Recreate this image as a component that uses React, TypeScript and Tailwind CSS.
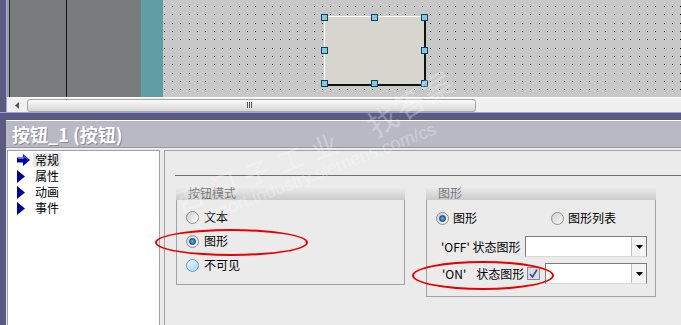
import React from "react";

type RadioState = "off" | "on" | "hover";

function Radio({ state }: { state: RadioState }) {
  if (state === "hover") {
    return (
      <span className="w-[13px] h-[13px] shrink-0 rounded-full border border-[#5f9fd2] bg-linear-to-br from-[#eef8ff] to-[#a3d5f6]" />
    );
  }
  return (
    <span className="w-[13px] h-[13px] shrink-0 rounded-full border border-[#8e8e8e] bg-linear-to-br from-[#cfcfcf] to-[#fbfbfb] flex items-center justify-center">
      {state === "on" && (
        <span className="w-[7px] h-[7px] rounded-full border border-[#0b3f78] bg-radial from-[#63b6f0] to-[#0d55a0]" />
      )}
    </span>
  );
}

function Combo({ width }: { width: string }) {
  return (
    <div
      className={`${width} h-[21px] bg-white border border-[#7c7c7c] border-b-[#d8d8d8] flex justify-end`}
    >
      <div className="w-[15px] h-full bg-[#f4f4f4] border-l border-[#c4c4c4] flex items-center justify-center">
        <svg width="7" height="4" viewBox="0 0 7 4">
          <path d="M0 0h7L3.5 4z" fill="#000" />
        </svg>
      </div>
    </div>
  );
}

function GroupBox({
  title,
  width,
  height,
  children,
}: {
  title: string;
  width: string;
  height: string;
  children: React.ReactNode;
}) {
  return (
    <div className={`${width} ${height} flex flex-col`}>
      <div className="h-[14px] bg-linear-to-b from-[#efefef] to-[#cbcbcb] pl-[12px] text-[12px] leading-[14px] text-[#7a7a7a]">
        {title}
      </div>
      <div className="flex-1 border border-t-0 border-[#a2a2a2]">{children}</div>
    </div>
  );
}

const Tri = () => (
  <svg width="8" height="13" viewBox="0 0 8 13">
    <path d="M0 0L8 6.5L0 13Z" fill="#000090" />
  </svg>
);

const Arrow = () => (
  <svg width="13" height="12" viewBox="0 0 13 12">
    <path d="M0 3.5h6V0l7 6-7 6V8.5H0z" fill="#0000a8" />
    <path d="M1 4.5h6V2l4 3.5" fill="none" stroke="#5a6cf0" strokeWidth="1" />
  </svg>
);

const navItems = [
  { label: "常规", active: true },
  { label: "属性", active: false },
  { label: "动画", active: false },
  { label: "事件", active: false },
];

function Handle({ cls }: { cls: string }) {
  return (
    <span
      className={`absolute w-[7px] h-[7px] bg-[#7ccaee] border border-[#1e3d4c] ${cls}`}
    />
  );
}

export default function App() {
  return (
    <div className="relative w-[681px] h-[325px] overflow-hidden bg-[#5b5b82] flex flex-col font-['Noto_Sans_CJK_SC',sans-serif] text-black">
      {/* editor area */}
      <div className="ml-[6px] border-l border-[#a8a8ec] flex flex-col">
        <div className="h-[97px] flex">
          <div className="w-[134px] flex bg-[#787c7c]">
            <div className="w-[2px] bg-[#9a9aa8]" />
            <div className="w-px bg-[#2c2c2c]" />
            <div className="w-[56px]" />
            <div className="w-px bg-[#111]" />
            <div className="flex-1" />
          </div>
          <div className="w-[22px] bg-[#5f9ea5]" />
          <div className="relative flex-1 bg-[#c8c8c8]">
            <svg className="absolute inset-0" width="100%" height="100%">
              <defs>
                <pattern
                  id="dots"
                  x="9"
                  y="6"
                  width="25"
                  height="25"
                  patternUnits="userSpaceOnUse"
                >
                  <rect x="0" y="0" width="1" height="1" fill="#000" />
                  <rect x="8" y="0" width="1" height="1" fill="#000" />
                  <rect x="17" y="0" width="1" height="1" fill="#000" />
                  <rect x="0" y="8" width="1" height="1" fill="#000" />
                  <rect x="8" y="8" width="1" height="1" fill="#000" />
                  <rect x="17" y="8" width="1" height="1" fill="#000" />
                  <rect x="0" y="17" width="1" height="1" fill="#000" />
                  <rect x="8" y="17" width="1" height="1" fill="#000" />
                  <rect x="17" y="17" width="1" height="1" fill="#000" />
                </pattern>
              </defs>
              <rect width="100%" height="100%" fill="url(#dots)" />
            </svg>
            <div className="absolute left-[161px] top-[16px] w-[102px] h-[70px] bg-[#d6d6ce] border-t border-l border-white border-r-2 border-b-2 border-r-[#111] border-b-[#111]" />
            <Handle cls="left-[158px] top-[14px]" />
            <Handle cls="left-[208px] top-[14px]" />
            <Handle cls="left-[258px] top-[14px]" />
            <Handle cls="left-[158px] top-[47px]" />
            <Handle cls="left-[258px] top-[47px]" />
            <Handle cls="left-[158px] top-[80px]" />
            <Handle cls="left-[208px] top-[80px]" />
            <Handle cls="left-[258px] top-[80px]" />
          </div>
        </div>
        {/* scrollbar */}
        <div className="h-[15px] bg-[#f0f0f0] border-t border-white flex items-center">
          <div className="w-[20px] flex justify-center">
            <svg width="4" height="7" viewBox="0 0 4 7">
              <path d="M4 0v7L0 3.5z" fill="#555" />
            </svg>
          </div>
          <div className="w-[449px] h-[13px] rounded-[3px] border border-[#a6a6a6] bg-linear-to-b from-[#fbfbfb] to-[#d6d6d6] flex items-center justify-center">
            <div className="flex gap-[1px] ml-[-4px]">
              <span className="w-px h-[6px] bg-[#555]" />
              <span className="w-px h-[6px] bg-[#555]" />
              <span className="w-px h-[6px] bg-[#555]" />
            </div>
          </div>
        </div>
      </div>

      {/* divider band */}
      <div className="h-[8px] border-t border-[#9c9cf2]" />

      {/* title */}
      <div className="ml-[6px] h-[27px] border-t border-white bg-[#b9b9c6] pl-[6px] flex items-center">
        <span className="text-[18px] font-bold text-white leading-none [text-shadow:1px_1px_0_#8a8a98]">
          按钮_1 (按钮)
        </span>
      </div>
      <div className="ml-[6px] h-[3px] border-t border-[#9a9a9a] bg-[#ebebeb]" />

      {/* property panels */}
      <div className="ml-[6px] pl-px flex-1 flex bg-[#e8e8ec]">
        <div className="w-[153px] bg-white border border-b-0 border-[#a0a0a0] pt-px pl-[9px]">
          {navItems.map((item) => (
            <div key={item.label} className="h-[16px] flex items-center">
              <span className="w-[16px] flex items-center">
                {item.active ? <Arrow /> : <Tri />}
              </span>
              <span
                className={`px-[2px] h-[14px] flex items-center text-[12px] leading-none ${
                  item.active ? "bg-[#e8e8e8]" : ""
                }`}
              >
                {item.label}
              </span>
            </div>
          ))}
        </div>
        <div className="w-[4px] bg-[#ebebeb]" />
        <div className="flex-1 bg-[#ebebeb] border-l border-t border-[#a0a0a0] pt-[24px] pl-[10px]">
          <div className="h-px bg-[#707070]" />
          <div className="mt-[10px] ml-px flex items-start text-[12px] leading-none">
            <GroupBox title="按钮模式" width="w-[229px]" height="h-[99px]">
              <div className="pt-[5px] pl-[9px] flex flex-col">
                <div className="h-[24px] flex items-center gap-[5px]">
                  <Radio state="off" />
                  <span>文本</span>
                </div>
                <div className="h-[24px] flex items-center gap-[5px]">
                  <Radio state="on" />
                  <span>图形</span>
                </div>
                <div className="h-[24px] flex items-center gap-[5px]">
                  <Radio state="hover" />
                  <span>不可见</span>
                </div>
              </div>
            </GroupBox>
            <div className="w-[21px]" />
            <GroupBox title="图形" width="w-[230px]" height="h-[111px]">
              <div className="pt-[8px] pl-[9px] flex flex-col">
                <div className="h-[20px] flex items-center">
                  <div className="w-[115px] flex items-center gap-[4px]">
                    <Radio state="on" />
                    <span>图形</span>
                  </div>
                  <div className="flex items-center gap-[4px]">
                    <Radio state="off" />
                    <span>图形列表</span>
                  </div>
                </div>
                <div className="mt-[8px] h-[21px] flex items-center">
                  <span className="w-[89px] pl-[5px]">'OFF' 状态图形</span>
                  <Combo width="w-[122px]" />
                </div>
                <div className="mt-[6px] h-[21px] flex items-center">
                  <span className="w-[91px] pl-[6px] flex">
                    <span>'ON'</span>
                    <span className="ml-[10px]">状态图形</span>
                  </span>
                  <span className="w-[13px] h-[13px] border border-[#8a8a8a] bg-[#dcdcdc] flex items-center justify-center">
                    <svg width="9" height="9" viewBox="0 0 9 9">
                      <path d="M1 5l2.5 3L8 0.5" fill="none" stroke="#2c4fa6" strokeWidth="1.6" />
                    </svg>
                  </span>
                  <span className="w-[5px]" />
                  <Combo width="w-[102px]" />
                </div>
              </div>
            </GroupBox>
          </div>
        </div>
      </div>

      {/* watermark */}
      <div className="pointer-events-none absolute left-[182px] top-[188px] origin-bottom-left -rotate-[21deg] text-[26px] leading-none tracking-[10px] text-white/30">
        西门子工业
      </div>
      <div className="pointer-events-none absolute left-[195px] top-[212px] origin-bottom-left -rotate-[21deg] font-['Liberation_Sans',sans-serif] text-[18px] leading-none text-white/30">
        support.industry.siemens.com/cs
      </div>
      <div className="pointer-events-none absolute left-[377px] top-[110px] origin-bottom-left -rotate-[32deg] text-[30px] leading-none tracking-[2px] text-white/30">
        找答案
      </div>

      {/* annotations */}
      <div className="pointer-events-none absolute left-[155px] top-[229px] w-[153px] h-[27px] rounded-[50%] border-2 border-[#e80000]" />
      <div className="pointer-events-none absolute left-[412px] top-[261px] w-[142px] h-[29px] rounded-[50%] border-2 border-[#e80000]" />
    </div>
  );
}
